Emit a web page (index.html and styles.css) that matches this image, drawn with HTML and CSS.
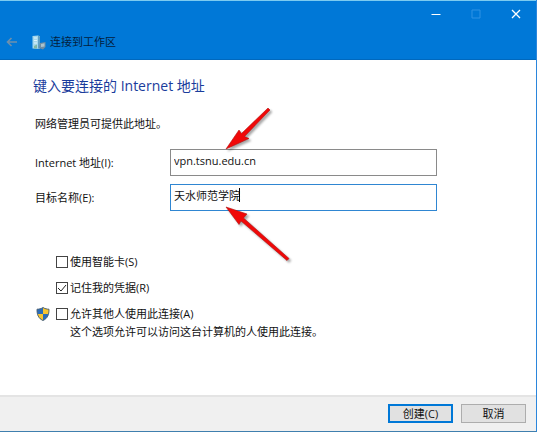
FILE: index.html
```html
<!DOCTYPE html>
<html lang="zh-CN">
<head>
  <meta charset="UTF-8">
  <meta name="viewport" content="width=device-width, initial-scale=1.0">
  <title>连接到工作区</title>
  <link rel="stylesheet" href="styles.css">
</head>
<body>
  <form class="window">
    <header class="title-bar">
      <div class="window-controls">
        <button type="button" class="control-btn" aria-label="最小化">
          <svg width="10" height="10" viewBox="0 0 10 10"><path d="M0.5 5.5H9.5" stroke="#fff" fill="none"/></svg>
        </button>
        <button type="button" class="control-btn" aria-label="最大化" disabled>
          <svg width="10" height="10" viewBox="0 0 10 10"><path d="M1 1H9V9H1Z" stroke="#2f92e4" fill="none"/></svg>
        </button>
        <button type="button" class="control-btn" aria-label="关闭">
          <svg width="10" height="10" viewBox="0 0 10 10"><path d="M1 1L9 9M9 1L1 9" stroke="#fff" stroke-width="1.3" fill="none"/></svg>
        </button>
      </div>
      <div class="wizard-title">
        <button type="button" class="back-btn" aria-label="返回">
          <svg width="12" height="12" viewBox="0 0 12 12"><path d="M11 6H2M5.5 2L1.5 6L5.5 10" stroke="#6f90ac" stroke-width="1.6" fill="none"/></svg>
        </button>
        <svg class="wizard-icon" width="14" height="15" viewBox="0 0 14 15">
          <path d="M0.5 1L6 0.5L8 1.5V14L0.5 13.5Z" fill="#a5d7ec"/>
          <path d="M6 0.5L8 1.5V14L6 13.5Z" fill="#5f9fc4"/>
          <path d="M2 3H5M2 5.500H5M2 8H5" stroke="#dff4fb"/>
          <path d="M2 11L5 9.500V13.500H2Z" fill="#7fb7a4"/>
          <path d="M8 8L13.500 7V12L11 14.500L7 13Z" fill="#6f8da3"/>
          <path d="M9 9L12.500 8.300V11.500L9 12Z" fill="#a9c3cf"/>
        </svg>
        <span>连接到工作区</span>
      </div>
    </header>

    <main class="content">
      <h1>键入要连接的 Internet 地址</h1>
      <p class="hint">网络管理员可提供此地址。</p>

      <!-- 地址与名称 -->
      <div class="fields">
        <label for="address">Internet 地址(I):</label>
        <div class="field">
          <input class="text-box" type="text" id="address" value="vpn.tsnu.edu.cn">
          <svg class="arrow arrow-down" width="52" height="48" viewBox="0 0 52 48">
            <path d="M1 42L14 23L16.500 26.500L43 1L45 3L19.500 29.500L24 31.500Z" fill="#f00808" stroke="#b01010" stroke-width="0.6"/>
          </svg>
        </div>

        <label for="target">目标名称(E):</label>
        <div class="field">
          <input class="text-box text-box-active" type="text" id="target" value="天水师范学院">
          <span class="caret"></span>
          <svg class="arrow arrow-up" width="70" height="62" viewBox="0 0 70 62">
            <path d="M1 2L22 9L18.500 13L64 53.500L62 55.500L16 16L14 19.500Z" fill="#f00808" stroke="#b01010" stroke-width="0.6"/>
          </svg>
        </div>
      </div>

      <!-- 选项 -->
      <div class="options">
        <div class="option">
          <input type="checkbox" id="smartcard">
          <label for="smartcard">使用智能卡(S)</label>
        </div>
        <div class="option">
          <input type="checkbox" id="remember" checked>
          <label for="remember">记住我的凭据(R)</label>
        </div>
        <div class="option">
          <svg class="shield" width="14" height="14" viewBox="0 0 14 14">
            <path d="M7 0.500C9 1.800 11 2.200 13 2.200C13.200 7.500 11.500 11.500 7 13.500C2.500 11.500 0.800 7.500 1 2.200C3 2.200 5 1.800 7 0.500Z" fill="#2b6cb8"/>
            <path d="M7 0.500C9 1.800 11 2.200 13 2.200Q13 5 12.600 7H7Z" fill="#f7c531"/>
            <path d="M1.400 7H7V13.500C4 12.200 2 10 1.400 7Z" fill="#f7c531"/>
            <path d="M7 0.500C9 1.800 11 2.200 13 2.200C13.200 7.500 11.500 11.500 7 13.500C2.500 11.500 0.800 7.500 1 2.200C3 2.200 5 1.800 7 0.500Z" fill="none" stroke="#4b5f70" stroke-width="0.9"/>
          </svg>
          <input type="checkbox" id="share">
          <label for="share">允许其他人使用此连接(A)</label>
        </div>
        <p class="option-note">这个选项允许可以访问这台计算机的人使用此连接。</p>
      </div>
    </main>

    <footer class="actions">
      <button type="submit" class="btn btn-default">创建(C)</button>
      <button type="button" class="btn">取消</button>
    </footer>
  </form>
</body>
</html>
```
FILE: styles.css
```css
* {
  box-sizing: border-box;
  margin: 0;
  padding: 0;
}

body, input, button {
  font-family: "Open Sans", "Noto Sans CJK SC", sans-serif;
  font-size: 11px;
  color: #111;
}

body {
  background: #fff;
  line-height: 16px;
}

.window {
  display: flex;
  flex-direction: column;
  min-height: 100vh;
  border-right: 1px solid #2b86dc;
  border-bottom: 1px solid #3f7fae;
}

.title-bar {
  height: 60px;
  background: #0078d7;
  border-top: 1px solid #7ccbf0;
  border-bottom: 1px solid #0068bd;
}

.window-controls {
  display: flex;
  justify-content: flex-end;
  height: 26px;
}

.control-btn {
  display: flex;
  align-items: center;
  justify-content: center;
  width: 40px;
  border: none;
  background: none;
}

.wizard-title {
  display: flex;
  align-items: center;
  height: 30px;
  padding-left: 6px;
  color: #04203c;
}

.back-btn {
  display: flex;
  border: none;
  background: none;
}

.wizard-icon {
  margin: 0 4px 0 14px;
}

.content {
  flex: 1;
  padding: 16px 33px;
}

h1 {
  font-size: 14px;
  font-weight: 400;
  line-height: 20px;
  color: #1a3c9c;
}

.hint {
  margin: 20px 0 17px;
  padding-left: 2px;
}

.fields {
  display: grid;
  grid-template-columns: 135px 267px;
  align-items: center;
  row-gap: 8px;
  padding-left: 2px;
}

.field {
  position: relative;
}

.text-box {
  display: block;
  width: 100%;
  height: 27px;
  padding: 0 3px 5px;
  border: 1px solid #8a8a8a;
  border-radius: 0;
  outline: none;
  background: #fff;
}

.text-box-active {
  border: 1px solid #2f86d2;
}

.caret {
  position: absolute;
  top: 4px;
  left: 69px;
  width: 1px;
  height: 14px;
  background: #000;
}

.arrow {
  position: absolute;
  left: 55px;
  filter: drop-shadow(2px 2px 1px rgba(0, 0, 0, 0.35));
  pointer-events: none;
}

.arrow-down {
  bottom: 21px;
}

.arrow-up {
  top: 21px;
}

.options {
  margin-top: 43px;
  padding-left: 23px;
}

.option {
  position: relative;
  display: flex;
  align-items: center;
  gap: 2px;
  margin-bottom: 10px;
}

.option input {
  appearance: none;
  width: 12px;
  height: 12px;
  border: 1px solid #444;
  background: #fff;
}

.option input:checked {
  background: #fff url("data:image/svg+xml,%3Csvg xmlns='http://www.w3.org/2000/svg' viewBox='0 0 10 10'%3E%3Cpath d='M1 5L4 8L9 2' fill='none' stroke='%23222'/%3E%3C/svg%3E");
}

.shield {
  position: absolute;
  top: 1px;
  left: -20px;
}

.option-note {
  margin-top: -8px;
  padding-left: 14px;
}

.actions {
  display: flex;
  justify-content: flex-end;
  gap: 8px;
  padding: 7px 10px 8px;
  border-top: 2px solid #e4e4e4;
  background: #f0f0f0;
}

.btn {
  width: 65px;
  height: 19px;
  border: 1px solid #adadad;
  background: #e1e1e1;
  line-height: 15px;
}

.btn-default {
  border: 2px solid #0078d7;
}
```
